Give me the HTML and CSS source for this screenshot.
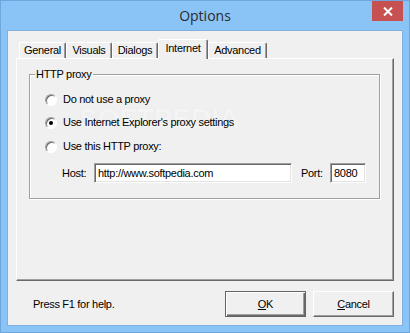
FILE: index.html
```html
<!DOCTYPE html>
<html>
<head>
<meta charset="utf-8">
<link rel="stylesheet" href="styles.css">
</head>
<body>
<div class="window">
  <div class="titlebar">
    <span class="title">Options</span>
    <div class="close">
      <svg width="10" height="9" viewBox="0 0 10 9"><path d="M1 0.5 L9 8.5 M9 0.5 L1 8.5" stroke="#fff" stroke-width="2" fill="none"/></svg>
    </div>
  </div>
  <div class="client">
    <div class="tabs">
      <div class="tab w-general">General</div>
      <div class="tab w-visuals">Visuals</div>
      <div class="tab w-dialogs">Dialogs</div>
      <div class="tab selected w-internet">Internet</div>
      <div class="tab w-advanced">Advanced</div>
    </div>
    <div class="panel">
      <div class="watermark">SOFTPEDIA</div>
      <div class="group">
        <span class="legend">HTTP proxy</span>
        <div class="row r1"><span class="radio"></span><span>Do not use a proxy</span></div>
        <div class="row r2"><span class="radio checked"></span><span>Use Internet Explorer's proxy settings</span></div>
        <div class="row r3"><span class="radio"></span><span>Use this HTTP proxy:</span></div>
        <div class="hostrow">
          <span class="lbl-host">Host:</span>
          <span class="input host">http://www.softpedia.com</span>
          <span class="lbl-port">Port:</span>
          <span class="input port">8080</span>
        </div>
      </div>
    </div>
    <div class="footer">
      <span class="help">Press F1 for help.</span>
      <div class="buttons">
        <div class="btn default"><u>O</u>K</div>
        <div class="btn"><u>C</u>ancel</div>
      </div>
    </div>
  </div>
</div>
</body>
</html>
```
FILE: styles.css
```css
html, body {
  margin: 0;
  padding: 0;
  background: #8ac4f7;
}
body {
  font-family: "Liberation Sans", Arial, sans-serif;
  font-size: 11px;
  letter-spacing: -0.3px;
  color: #000;
}
.window {
  width: 410px;
  height: 333px;
  box-sizing: border-box;
  border: 1px solid #6fa6dd;
  background: #8ac4f7;
  padding: 0 6px 6px 6px;
  display: flex;
  flex-direction: column;
}
.titlebar {
  height: 29px;
  flex: none;
  display: flex;
  align-items: center;
  justify-content: center;
  position: relative;
}
.title {
  font-family: "Open Sans", "Noto Sans", sans-serif;
  font-size: 14px;
  letter-spacing: 0;
  color: #2b2b2b;
  margin-top: -1px;
}
.close {
  position: absolute;
  top: 0;
  right: 0;
  width: 31px;
  height: 20px;
  background: #c75050;
  display: flex;
  align-items: center;
  justify-content: center;
}
.close svg { display: block; }
.client {
  flex: 1;
  background: #f0f0f0;
  border: 1px solid #7fb0e2;
  padding: 8px 8px 0 8px;
  display: flex;
  flex-direction: column;
}
.tabs {
  height: 19px;
  flex: none;
  display: flex;
  align-items: flex-end;
  padding-left: 3px;
  position: relative;
  z-index: 1;
}
.tab {
  height: 16px;
  box-sizing: border-box;
  border-top: 1px solid #fff;
  border-left: 1px solid #fff;
  border-right: 1px solid #696969;
  box-shadow: inset -1px 0 0 #a0a0a0;
  border-radius: 2px 2px 0 0;
  display: flex;
  align-items: center;
  justify-content: center;
  background: #f0f0f0;
  line-height: 13px;
}
.tab.selected {
  height: 20px;
  margin-bottom: -1px;
  padding-bottom: 3px;
}
.w-general { width: 47px; }
.w-visuals { width: 46px; }
.w-dialogs { width: 46px; }
.w-internet { width: 50px; }
.w-advanced { width: 59px; }
.panel {
  flex: none;
  height: 223px;
  box-sizing: border-box;
  border: 1px solid;
  border-color: #fff #696969 #696969 #fff;
  box-shadow: inset -1px -1px 0 #a0a0a0;
  position: relative;
  padding: 15px 0 0 12px;
}
.group {
  width: 351px;
  height: 125px;
  box-sizing: border-box;
  border: 1px solid #a0a0a0;
  box-shadow: inset 1px 1px 0 #fff, 1px 1px 0 #fff;
  position: relative;
  padding: 18px 0 0 15px;
  display: flex;
  flex-direction: column;
}
.legend {
  position: absolute;
  top: -7px;
  left: 5px;
  padding: 0 2px 0 1px;
  background: #f0f0f0;
  line-height: 13px;
}
.row {
  height: 13px;
  display: flex;
  align-items: center;
  line-height: 13px;
}
.r2 { margin-top: 10px; }
.r3 { margin-top: 11px; }
.radio {
  width: 12px;
  height: 12px;
  box-sizing: border-box;
  border-radius: 50%;
  border: 1px solid;
  border-color: #a0a0a0 #fff #fff #a0a0a0;
  box-shadow: inset 1px 1px 0 #696969;
  background: #fff;
  margin-right: 6px;
  flex: none;
  position: relative;
}
.radio.checked::after {
  content: "";
  position: absolute;
  left: 3px;
  top: 3px;
  width: 4px;
  height: 4px;
  border-radius: 50%;
  background: #000;
}
.hostrow {
  margin-top: 10px;
  padding-left: 17px;
  height: 20px;
  display: flex;
  align-items: center;
}
.lbl-host { width: 32px; }
.lbl-port { width: 29px; margin-left: 9px; }
.input {
  height: 20px;
  box-sizing: border-box;
  border: 1px solid;
  border-color: #a0a0a0 #fff #fff #a0a0a0;
  box-shadow: inset 1px 1px 0 #696969, inset -1px -1px 0 #e3e3e3;
  background: #fff;
  padding: 0 0 0 3px;
  display: flex;
  align-items: center;
}
.host { width: 198px; }
.port { width: 36px; }
.watermark {
  position: absolute;
  left: 62px;
  top: 44px;
  font-size: 28px;
  font-weight: bold;
  letter-spacing: 0;
  color: #f4f4f4;
  text-shadow: 0 0 1px #e2e2e2;
}
.footer {
  flex: 1;
  display: flex;
  align-items: flex-start;
  justify-content: space-between;
  padding: 10px 0 0 17px;
}
.help {
  line-height: 26px;
}
.buttons {
  display: flex;
  gap: 7px;
}
.btn {
  width: 81px;
  height: 26px;
  box-sizing: border-box;
  border: 1px solid;
  border-color: #fff #696969 #696969 #fff;
  box-shadow: inset -1px -1px 0 #a0a0a0;
  display: flex;
  align-items: center;
  justify-content: center;
  background: #f0f0f0;
}
.btn.default {
  border: 1px solid #646464;
  box-shadow: inset 1px 1px 0 #fff, inset -1px -1px 0 #696969, inset -2px -2px 0 #a0a0a0;
}
```
